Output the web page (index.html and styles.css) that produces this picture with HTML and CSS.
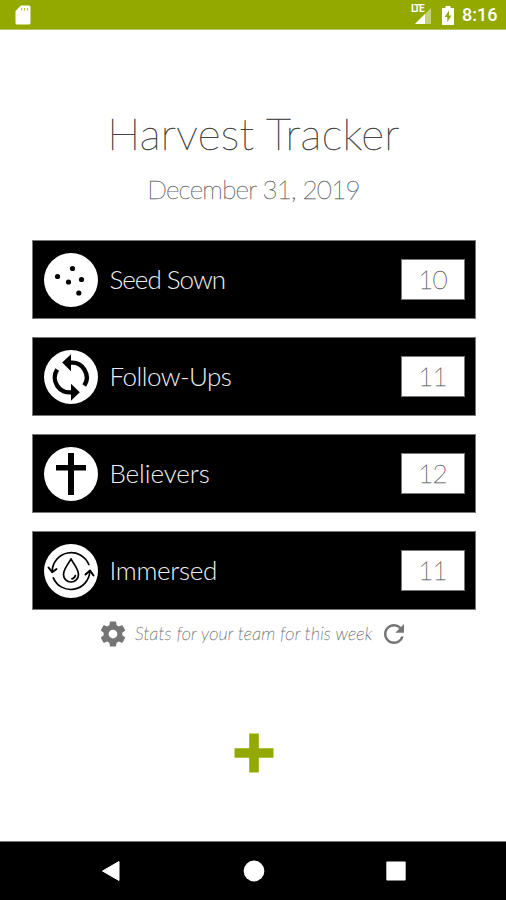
FILE: index.html
```
<!DOCTYPE html>
<html lang="en">
<head>
<meta charset="utf-8">
<title>Harvest Tracker</title>
<link rel="stylesheet" href="styles.css">
</head>
<body>
<header class="status">
  <svg class="sd" width="16" height="20" viewBox="0 0 16 20"><path d="M6 .5h8q1.500 0 1.500 1.500v16q0 1.500-1.500 1.500H2Q.5 19.500.5 18V6z" fill="#fff"/><path d="M6.500 3v2.500M9.500 3v2.500M12.500 3v2.500" stroke="#93a900" stroke-width="1.100" opacity=".7"/></svg>
  <div class="status-right">
    <div class="signal"><span class="lte">LTE</span><svg width="18" height="17" viewBox="0 0 18 17"><path d="M17 0v16H1z" fill="#c6d27b"/><path d="M11 6v10H1z" fill="#fff"/></svg></div>
    <svg class="battery" width="12" height="19" viewBox="0 0 12 19"><path d="M3.500 0h5v2H12v17H0V2h3.500z" fill="#fff"/><path d="M7 4.500 2.700 11h2.600v5L9.500 9.500H7z" fill="#93a900"/></svg>
    <span class="time">8:16</span>
  </div>
</header>
<main class="main">
  <h1 class="title">Harvest Tracker</h1>
  <p class="date">December 31, 2019</p>
  <section class="rows">
    <div class="row">
      <svg class="icon" viewBox="0 0 54 54"><circle cx="27" cy="27" r="27" fill="#fff"/><circle cx="28.500" cy="15.500" r="2.600"/><circle cx="13.500" cy="23.500" r="2.600"/><circle cx="24.500" cy="29" r="2.600"/><circle cx="37.500" cy="26.500" r="2.600"/><circle cx="34.800" cy="40" r="2.600"/></svg>
      <span class="label seed">Seed Sown</span><span class="count">10</span>
    </div>
    <div class="row">
      <svg class="icon" viewBox="0 0 54 54"><circle cx="27" cy="27" r="27" fill="#fff"/><path d="M26 12.800A14.800 14.800 0 0 1 40.300 35.500M28 42.200A14.800 14.800 0 0 1 13.200 19.500" fill="none" stroke="#000" stroke-width="4.400"/><path d="M27 4.300v17L18.200 12.500zM27 33.700v17l8.800-8.500z"/></svg>
      <span class="label follow">Follow-Ups</span><span class="count">11</span>
    </div>
    <div class="row">
      <svg class="icon" viewBox="0 0 54 54"><circle cx="27" cy="27" r="27" fill="#fff"/><path d="M24 6h6v12h12v5.500H30V48h-6V23.500H12V18h12z"/></svg>
      <span class="label believe">Believers</span><span class="count">12</span>
    </div>
    <div class="row">
      <svg class="icon" viewBox="0 0 54 54"><circle cx="27" cy="27" r="27" fill="#fff"/><g fill="none" stroke="#000" stroke-width="1.700" stroke-linecap="round" stroke-linejoin="round"><path d="M44.800 20.500A19 19 0 0 0 8.200 27.500M9.300 33.800A19 19 0 0 0 45.800 27.500"/><path d="M4.500 23.500l3.700 4.700 4.300-3.200M41.500 30.500l4.500-4 3.500 5" stroke-width="2"/><path d="M27 14.800c2.500 5.200 7.500 10 7.500 15.700a7.500 7.500 0 0 1-15 0c0-5.700 5-10.500 7.500-15.700z"/><path d="M31.300 31.500a4.300 4.300 0 0 1-3.300 3.300"/></g></svg>
      <span class="label immerse">Immersed</span><span class="count">11</span>
    </div>
  </section>
  <div class="stats">
    <svg class="gear" width="30" height="30" viewBox="0 0 24 24"><path fill="#757575" d="M19.430 12.980c.04-.32.070-.64.070-.98s-.03-.66-.07-.98l2.110-1.650c.19-.15.240-.42.120-.64l-2-3.460c-.12-.22-.39-.3-.61-.22l-2.490 1c-.52-.4-1.080-.73-1.690-.98l-.38-2.650C14.460 2.180 14.250 2 14 2h-4c-.25 0-.46.18-.49.42l-.38 2.650c-.61.25-1.170.59-1.690.98l-2.490-1c-.23-.09-.49 0-.61.22l-2 3.460c-.13.22-.07.49.12.64l2.110 1.650c-.04.32-.07.65-.07.98s.03.66.07.98l-2.110 1.650c-.19.15-.24.42-.12.64l2 3.460c.12.22.39.3.61.22l2.490-1c.52.4 1.080.73 1.690.98l.38 2.650c.03.24.24.42.49.42h4c.25 0 .46-.18.49-.42l.38-2.650c.61-.25 1.170-.59 1.690-.98l2.490 1c.23.09.49 0 .61-.22l2-3.460c.12-.22.070-.49-.12-.64l-2.110-1.650zM12 15.500c-1.930 0-3.500-1.570-3.500-3.500s1.570-3.500 3.500-3.500 3.500 1.570 3.500 3.500-1.570 3.500-3.500 3.500z"/></svg>
    <em class="note">Stats for your team for this week</em>
    <svg class="refresh" width="30" height="30" viewBox="0 0 24 24"><path fill="#757575" d="M17.650 6.350A7.958 7.958 0 0 0 12 4c-4.420 0-7.990 3.580-7.990 8s3.570 8 7.990 8c3.730 0 6.840-2.550 7.730-6h-2.080A5.990 5.990 0 0 1 12 18c-3.310 0-6-2.690-6-6s2.690-6 6-6c1.660 0 3.140.69 4.220 1.780L13 11h7V4l-2.350 2.350z"/></svg>
  </div>
  <svg class="plus" width="40" height="40" viewBox="0 0 40 40"><path fill="#93a900" d="M15.200.5h9.600v14.700h14.700v9.600H24.800v14.700h-9.600V24.800H.5v-9.600h14.700z"/></svg>
</main>
<nav class="nav">
  <svg width="20" height="22" viewBox="0 0 20 22"><path d="M18 1.500v19L1.500 11z" fill="#fff" stroke="#fff" stroke-linejoin="round"/></svg>
  <svg width="22" height="22" viewBox="0 0 22 22"><circle cx="11" cy="11" r="10.400" fill="#fff"/></svg>
  <svg width="20" height="22" viewBox="0 0 20 22"><rect x=".3" y="1.500" width="19.400" height="19" rx="1" fill="#fff"/></svg>
</nav>
</body>
</html>
```
FILE: styles.css
```
* { box-sizing: border-box; }
body {
  margin: 0;
  height: 900px;
  display: flex;
  flex-direction: column;
  background: #fff;
  font-family: Lato, "Liberation Sans", sans-serif;
  overflow: hidden;
}
.status {
  height: 30px;
  flex: none;
  display: flex;
  justify-content: space-between;
  align-items: center;
  padding: 1px 9px 0 15px;
  background: #93a900;
  border-bottom: 1px solid #b9c65c;
}
.status-right { display: flex; align-items: center; color: #fff; }
.signal { display: flex; position: relative; padding: 2px 0 0 4px; width: 22px; margin-right: 10px; }
.signal svg { flex: none; }
.lte { position: absolute; left: 1px; top: -3px; font: 700 10px/12px Roboto, sans-serif; letter-spacing: -1.2px; }
.battery { margin-right: 8px; }
.time { font: 500 18px/22px Roboto, sans-serif; width: 35px; white-space: nowrap; }
.main { flex: 1; display: flex; flex-direction: column; align-items: center; padding-left: 1px; }
.title {
  margin: 77px 0 0;
  font-size: 44px;
  line-height: 52px;
  font-weight: 100;
  letter-spacing: 0.35px;
  color: #444;
  -webkit-text-stroke: 0.5px #444;
  white-space: nowrap;
}
.date {
  margin: 14px 0 0;
  font-size: 26px;
  line-height: 32px;
  font-weight: 100;
  letter-spacing: -0.75px;
  color: #666;
  -webkit-text-stroke: 0.4px #666;
  white-space: nowrap;
}
.rows { width: 444px; margin-top: 35px; display: grid; gap: 18px; }
.row {
  height: 79px;
  display: flex;
  align-items: center;
  padding: 0 10px 0 11px;
  background: #000;
  border: 1px solid #777;
}
.icon { width: 54px; height: 54px; flex: none; margin-right: 12px; }
.label { flex: 1; color: #eee; font-size: 26px; line-height: 32px; font-weight: 300; padding-bottom: 2px; }
.seed { letter-spacing: -1px; }
.follow { letter-spacing: -0.55px; }
.believe { letter-spacing: -0.1px; }
.immerse { letter-spacing: -0.3px; }
.count {
  width: 64px;
  height: 41px;
  border: 1px solid #777;
  background: #fff;
  color: #666;
  -webkit-text-stroke: 0.4px #666;
  font-size: 26px;
  line-height: 38px;
  font-weight: 100;
  letter-spacing: -0.8px;
  text-align: center;
}
.stats { display: flex; align-items: center; margin-top: 8px; height: 32px; }
.note {
  width: 238px;
  margin: 0 6px 2px 7px;
  font-size: 18px;
  line-height: 24px;
  font-weight: 100;
  letter-spacing: 0.15px;
  color: #666;
  -webkit-text-stroke: 0.3px #666;
  white-space: nowrap;
}
.plus { margin-top: 83px; }
.nav {
  height: 59px;
  flex: none;
  display: flex;
  justify-content: space-between;
  align-items: center;
  padding: 0 100px 0 101px;
  background: #000;
  border-top: 1px solid #777;
}
```
